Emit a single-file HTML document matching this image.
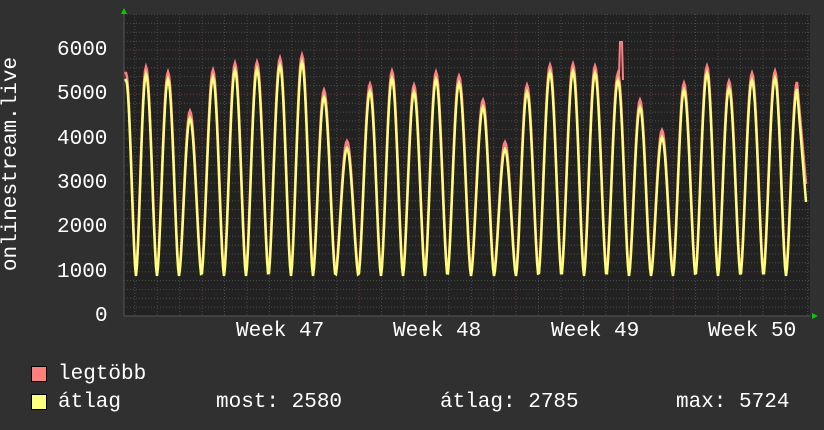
<!DOCTYPE html>
<html><head><meta charset="utf-8"><style>
html,body{margin:0;padding:0;background:#303030;}
body{width:824px;height:430px;position:relative;overflow:hidden;font-family:"Liberation Mono",monospace;color:#fff;}
.t{position:absolute;font-size:21px;line-height:20px;white-space:pre;}
.sq{position:absolute;width:14px;height:14px;border:1px solid #000;}
</style></head><body>
<svg id="g" width="824" height="430" style="position:absolute;left:0;top:0"></svg>
<div class="t" style="left:57px;top:41px">6000</div>
<div class="t" style="left:57px;top:85px">5000</div>
<div class="t" style="left:57px;top:130px">4000</div>
<div class="t" style="left:57px;top:174px">3000</div>
<div class="t" style="left:57px;top:218px">2000</div>
<div class="t" style="left:57px;top:263px">1000</div>
<div class="t" style="left:95px;top:307px">0</div>
<div class="t" style="left:-98px;top:154px;transform:rotate(-90deg);width:220px;text-align:center">onlinestream.live</div>
<div class="t" style="left:236px;top:322px">Week 47</div>
<div class="t" style="left:393px;top:322px">Week 48</div>
<div class="t" style="left:551px;top:322px">Week 49</div>
<div class="t" style="left:708px;top:322px">Week 50</div>
<div class="sq" style="left:31px;top:366px;background:#ff7f7f"></div>
<div class="sq" style="left:31px;top:394px;background:#ffff7f"></div>
<div class="t" style="left:58px;top:365px">legtöbb</div>
<div class="t" style="left:58px;top:393px">átlag</div>
<div class="t" style="left:216px;top:393px">most: 2580</div>
<div class="t" style="left:440px;top:393px">átlag: 2785</div>
<div class="t" style="left:676px;top:393px">max: 5724</div>
<script>
var s='';
s+='<rect x="124" y="14" width="686" height="302" fill="#222"/>';
for(var v=200;v<=6800;v+=200){var y=316-v*0.04433;if(y<14)break;
 s+='<line x1="124" x2="810" y1="'+y.toFixed(1)+'" y2="'+y.toFixed(1)+'" stroke="'+(v%1000==0?'#6a3a3a':'#4a4a4a')+'" stroke-dasharray="1,2"/>';}
for(var x=134.8;x<810;x+=22.43){var wk=[202,359,517,674].some(function(w){return Math.abs(w-x)<3;});
 s+='<line x1="'+x.toFixed(1)+'" x2="'+x.toFixed(1)+'" y1="14" y2="316" stroke="'+(wk?'#6a3a3a':'#4a4a4a')+'" stroke-dasharray="1,2"/>';}
var px=[126,146,168,190,213,235,257,280,302,324,347,370,392,414,436,459,483,505,527,550,573,595,618,640,662,684,707,729,752,775,797,819];
var py=[73,67,72,111,70,63,62,58,55,90,141,84,71,85,72,76,100,142,85,65,64,66,73,100,130,83,66,81,73,71,82,80];
function val(x){var i=0;while(i<px.length-2&&x>px[i+1])i++;
 var x0=px[i],x1=px[i+1],t=(x-x0)/(x1-x0);if(x<x0){t=0;}
 var tm=0.5,top,f;
 if(t<tm){top=py[i];f=0.5+0.5*Math.cos(Math.PI*t/tm);} else {top=py[i+1];f=0.5-0.5*Math.cos(Math.PI*(t-tm)/(1-tm));}
 f=Math.pow(f,0.8);return [top,f];}
function path(dTop,dBot,endY){var p='';var y797;for(var x=124;x<=806;x++){var r=val(x);var bot=272+dBot;var y=bot-(bot-(r[0]+dTop))*r[1];if(x==797)y797=y;if(x>797){y=y797+(endY-y797)*(x-797)/9;} p+=(x==124?'M':'L')+x+','+y.toFixed(1);}return p;}
s+='<path d="'+path(0,0,184)+'" fill="none" stroke="#ff7f7f" stroke-width="2.5"/>';
s+='<path d="M619,75L620,42L622,42L623,80" fill="none" stroke="#ff7f7f" stroke-width="2"/>';
s+='<path d="'+path(7,4,202)+'" fill="none" stroke="#ffff7f" stroke-width="2.5"/>';
s+='<line x1="124" x2="810" y1="316" y2="316" stroke="#555"/><line x1="124" x2="124" y1="12" y2="316" stroke="#555"/>';
s+='<polygon points="121,14 124,8 127,14" fill="#0c0"/><polygon points="812,313 818,316 812,319" fill="#0c0"/>';
document.getElementById('g').innerHTML=s;
</script>
</body></html>
